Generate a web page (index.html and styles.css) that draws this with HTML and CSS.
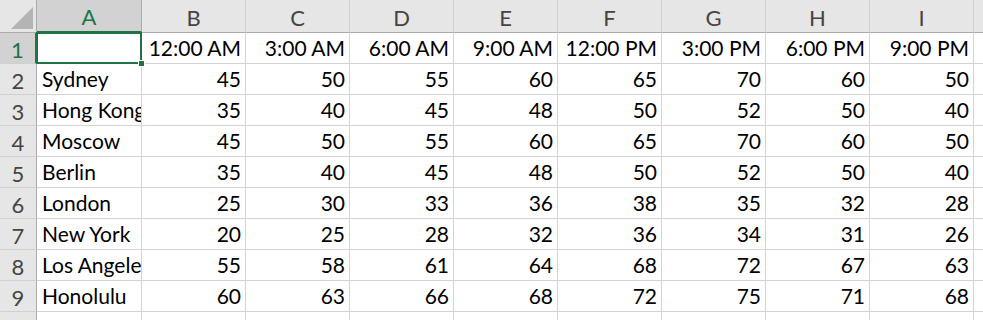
FILE: index.html
```html
<!DOCTYPE html>
<html>
<head>
<meta charset="utf-8">
<link rel="stylesheet" href="styles.css">
</head>
<body>
<div class="sheet">
  <div class="corner"><span class="tri"></span></div>
  <div class="ch sel">A</div><div class="ch">B</div><div class="ch">C</div><div class="ch">D</div><div class="ch">E</div><div class="ch">F</div><div class="ch">G</div><div class="ch">H</div><div class="ch">I</div><div class="ch last"></div>

  <div class="rh sel">1</div>
  <div class="c active"><span class="handle"></span></div><div class="c n">12:00 AM</div><div class="c n">3:00 AM</div><div class="c n">6:00 AM</div><div class="c n">9:00 AM</div><div class="c n">12:00 PM</div><div class="c n">3:00 PM</div><div class="c n">6:00 PM</div><div class="c n">9:00 PM</div><div class="c"></div>

  <div class="rh">2</div>
  <div class="c">Sydney</div><div class="c n">45</div><div class="c n">50</div><div class="c n">55</div><div class="c n">60</div><div class="c n">65</div><div class="c n">70</div><div class="c n">60</div><div class="c n">50</div><div class="c"></div>

  <div class="rh">3</div>
  <div class="c">Hong Kong</div><div class="c n">35</div><div class="c n">40</div><div class="c n">45</div><div class="c n">48</div><div class="c n">50</div><div class="c n">52</div><div class="c n">50</div><div class="c n">40</div><div class="c"></div>

  <div class="rh">4</div>
  <div class="c">Moscow</div><div class="c n">45</div><div class="c n">50</div><div class="c n">55</div><div class="c n">60</div><div class="c n">65</div><div class="c n">70</div><div class="c n">60</div><div class="c n">50</div><div class="c"></div>

  <div class="rh">5</div>
  <div class="c">Berlin</div><div class="c n">35</div><div class="c n">40</div><div class="c n">45</div><div class="c n">48</div><div class="c n">50</div><div class="c n">52</div><div class="c n">50</div><div class="c n">40</div><div class="c"></div>

  <div class="rh">6</div>
  <div class="c">London</div><div class="c n">25</div><div class="c n">30</div><div class="c n">33</div><div class="c n">36</div><div class="c n">38</div><div class="c n">35</div><div class="c n">32</div><div class="c n">28</div><div class="c"></div>

  <div class="rh">7</div>
  <div class="c">New York</div><div class="c n">20</div><div class="c n">25</div><div class="c n">28</div><div class="c n">32</div><div class="c n">36</div><div class="c n">34</div><div class="c n">31</div><div class="c n">26</div><div class="c"></div>

  <div class="rh">8</div>
  <div class="c">Los Angeles</div><div class="c n">55</div><div class="c n">58</div><div class="c n">61</div><div class="c n">64</div><div class="c n">68</div><div class="c n">72</div><div class="c n">67</div><div class="c n">63</div><div class="c"></div>

  <div class="rh">9</div>
  <div class="c">Honolulu</div><div class="c n">60</div><div class="c n">63</div><div class="c n">66</div><div class="c n">68</div><div class="c n">72</div><div class="c n">75</div><div class="c n">71</div><div class="c n">68</div><div class="c"></div>

  <div class="rh">10</div>
  <div class="c"></div><div class="c"></div><div class="c"></div><div class="c"></div><div class="c"></div><div class="c"></div><div class="c"></div><div class="c"></div><div class="c"></div><div class="c"></div>
</div>
</body>
</html>
```

FILE: styles.css
```css
html, body {
  margin: 0;
  padding: 0;
  background: #ffffff;
  overflow: hidden;
}

.sheet {
  display: grid;
  grid-template-columns: 37px 105px repeat(8, 104px) 1fr;
  grid-template-rows: 33px repeat(10, 31px);
  width: 983px;
  font-family: Lato, "Liberation Sans", sans-serif;
  font-size: 21px;
  color: #000;
}

.corner {
  position: relative;
  background: #e6e6e6;
  border-right: 1px solid #ababab;
  border-bottom: 1px solid #ababab;
}

.tri {
  position: absolute;
  right: 3px;
  bottom: 3px;
  width: 0;
  height: 0;
  border-left: 22px solid transparent;
  border-bottom: 22px solid #b4b4b4;
}

.ch {
  background: #e6e6e6;
  border-right: 1px solid #d0d0d0;
  border-bottom: 1px solid #ababab;
  display: flex;
  align-items: center;
  justify-content: center;
  color: #444444;
  font-size: 22px;
  padding-top: 2px;
}

.ch.sel {
  background: #d2d2d2;
  color: #217346;
  border-bottom: 2px solid #217346;
  border-right-color: #ababab;
}

.ch.last {
  border-right: none;
}

.rh {
  background: #e6e6e6;
  border-right: 1px solid #ababab;
  border-bottom: 1px solid #d0d0d0;
  display: flex;
  align-items: center;
  justify-content: center;
  color: #444444;
  font-size: 22px;
  padding-top: 2px;
}

.rh.sel {
  background: #d2d2d2;
  color: #217346;
  border-right: 2px solid #217346;
}

.c {
  border-right: 1px solid #d4d4d4;
  border-bottom: 1px solid #d4d4d4;
  display: flex;
  align-items: flex-end;
  padding: 0 4px 3px 5px;
  white-space: nowrap;
  overflow: hidden;
  line-height: 24px;
}

.c.n {
  justify-content: flex-end;
}

.c.active {
  position: relative;
  overflow: visible;
  z-index: 2;
}

.c.active::before {
  content: "";
  position: absolute;
  left: -1px;
  top: -1px;
  right: -1px;
  bottom: -1px;
  border: 2px solid #217346;
}

.handle {
  position: absolute;
  right: -4px;
  bottom: -4px;
  width: 5px;
  height: 5px;
  background: #217346;
  border: 1px solid #ffffff;
  z-index: 3;
}
```
